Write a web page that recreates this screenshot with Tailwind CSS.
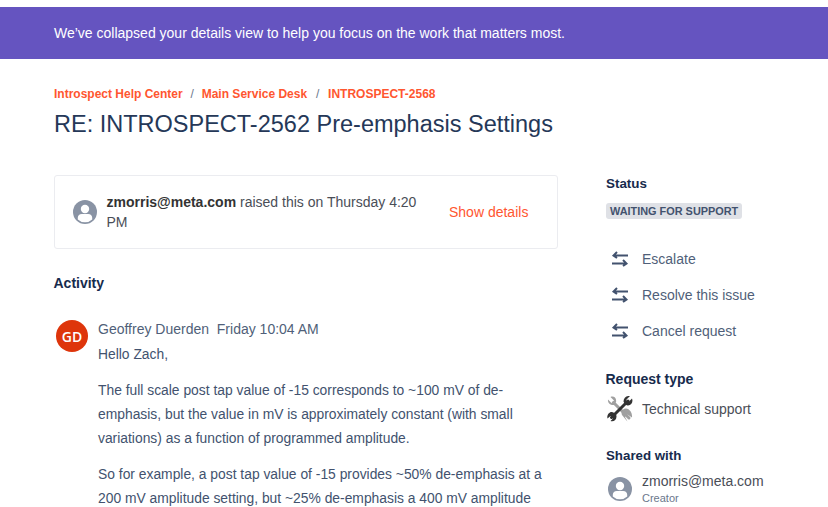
<!DOCTYPE html>
<html lang="en">
<head>
    <meta charset="UTF-8">
    <title>RE: INTROSPECT-2562 Pre-emphasis Settings</title>
    <script src="https://cdn.jsdelivr.net/npm/@tailwindcss/browser@4"></script>
</head>
<body class="bg-white h-[507px] overflow-hidden font-['Liberation_Sans',Arial,sans-serif] text-[14px] text-[#42526e]">
<div class="pt-[7px]">
    <div class="bg-[#6554c0] h-[52px] pl-[54px] flex items-center text-white text-[14px]">We’ve collapsed your details view to help you focus on the work that matters most.</div>
</div>

<div class="pl-[54px] flex">
    <div class="w-[504px] shrink-0">
        <div class="mt-[27px] flex items-center text-[12px] leading-[16px] font-bold text-[#ff5630] h-[16px]">
            <span>Introspect Help Center</span>
            <span class="font-normal text-[#6b778c] w-[19px] text-center">/</span>
            <span>Main Service Desk</span>
            <span class="font-normal text-[#6b778c] w-[21px] text-center">/</span>
            <span>INTROSPECT-2568</span>
        </div>
        <h1 class="mt-[6px] text-[23.5px] leading-[32px] text-[#253858] whitespace-nowrap">RE: INTROSPECT-2562 Pre-emphasis Settings</h1>

        <div class="mt-[35px] h-[74px] border border-[#ebecf0] rounded-[3px] flex items-center pl-[18px]">
            <svg class="w-6 h-6 shrink-0" viewBox="0 0 24 24">
                <circle cx="12" cy="12" r="12" fill="#8993a4"/>
                <circle cx="12" cy="9" r="4.2" fill="#fff"/>
                <path d="M4.8 19.5v-1.700c0-2.300 1.800-3.800 4-3.800h6.400c2.200 0 4 1.500 4 3.800v1.700a10.500 10.500 0 0 1-14.400 0z" fill="#fff"/>
            </svg>
            <div class="ml-[9.5px] w-[326px] leading-[20px] text-[#4a4e57]"><span class="font-bold text-[#333]">zmorris@meta.com</span> raised this on Thursday 4:20 PM</div>
            <a class="ml-[16.5px] text-[#ff5630]">Show details</a>
        </div>

        <div class="mt-[26px] -ml-[0.5px] font-bold text-[#172b4d] leading-[16px]">Activity</div>

        <div class="mt-[28px] flex">
            <div class="w-8 h-8 mt-[1px] ml-[2px] rounded-full bg-[#de350b] text-white flex items-center justify-center shrink-0 text-[14px] font-semibold font-['Open_Sans',sans-serif]">GD</div>
            <div class="ml-[10px] w-[452px] leading-[24px]">
                <div class="leading-[20px] text-[#505f79]">Geoffrey Duerden&nbsp; Friday 10:04 AM</div>
                <p class="mt-[3px] text-[13.85px] text-[#42526e]">Hello Zach,</p>
                <p class="mt-[12px] text-[13.85px] text-[#42526e]">The full scale post tap value of -15 corresponds to ~100 mV of de-emphasis, but the value in mV is approximately constant (with small variations) as a function of programmed amplitude.</p>
                <p class="mt-[12px] text-[13.85px] text-[#42526e]">So for example, a post tap value of -15 provides ~50% de-emphasis at a 200 mV amplitude setting, but ~25% de-emphasis a 400 mV amplitude</p>
            </div>
        </div>
    </div>

    <aside class="ml-[48px] w-[200px] shrink-0">
        <div class="mt-[117px] font-bold text-[13.4px] leading-[16px] text-[#172b4d]">Status</div>
        <span class="mt-[11px] inline-block bg-[#dfe1e6] rounded-[3px] px-[4px] h-[16px] leading-[16px] text-[10.9px] font-bold text-[#42526e]">WAITING FOR SUPPORT</span>

        <div class="mt-[26px] flex flex-col gap-[12px]">
            <div class="flex items-center h-6 text-[#505f79]">
                <svg class="w-[18px] h-[16px] ml-[5px] text-[#42526e]" viewBox="0 0 18 16" fill="none" stroke="currentColor" stroke-width="2"><path d="M17 4.500H2.500M6 1 2.500 4.500 6 7M1 12.500h14.500M12 9l3.500 3.500L12 15"/></svg>
                <span class="ml-[13px]">Escalate</span>
            </div>
            <div class="flex items-center h-6 text-[#505f79]">
                <svg class="w-[18px] h-[16px] ml-[5px] text-[#42526e]" viewBox="0 0 18 16" fill="none" stroke="currentColor" stroke-width="2"><path d="M17 4.500H2.500M6 1 2.500 4.500 6 7M1 12.500h14.500M12 9l3.500 3.500L12 15"/></svg>
                <span class="ml-[13px]">Resolve this issue</span>
            </div>
            <div class="flex items-center h-6 text-[#505f79]">
                <svg class="w-[18px] h-[16px] ml-[5px] text-[#42526e]" viewBox="0 0 18 16" fill="none" stroke="currentColor" stroke-width="2"><path d="M17 4.500H2.500M6 1 2.500 4.500 6 7M1 12.500h14.500M12 9l3.500 3.500L12 15"/></svg>
                <span class="ml-[13px]">Cancel request</span>
            </div>
        </div>

        <div class="mt-[28px] -ml-[0.5px] font-bold text-[#172b4d] leading-[16px] text-[14px]">Request type</div>
        <div class="mt-[9px] flex items-center h-[26px]">
            <svg class="w-[26px] h-[26px] ml-[1px] shrink-0" viewBox="0 0 26 26">
                <path d="M6.500 6.500 22 22" stroke="#a0a0a0" stroke-width="3" stroke-linecap="round"/>
                <path d="M1 3.500 4.500 7 7 4.500 3.500 1C6.500-.5 10 2 9 6L7 9C3.500 9.500.5 7 1 3.500zM24.500 24.500 20 20M19 12.500c-3 0-5.500 3-4 6.500l4.500 5.500 1 1-2.500-4.500 2.500-2.500 4.500 3C25.500 17 23 13 19 12.500z" fill="#a0a0a0"/>
                <path d="M21 5 4.500 21.500" stroke="#333" stroke-width="3" stroke-linecap="round"/>
                <path d="M25 2.500 21.500 6 19.500 5 19.500 3.500 23 0C19.500-.5 16.500 2 16.500 5.500L18 8.500 20.500 9.500C24 10 26.500 6.500 25 2.500zM.5 22.500l3-2.500 2.500 2.500L3.500 25c3 1 6-1 6-4.500 0-1.500-.5-3-2-3.500l-2.500-1C2.500 15.500-.5 19 .5 22.500z" fill="#333"/>
            </svg>
            <span class="ml-[9px] text-[#4a4e57]">Technical support</span>
        </div>

        <div class="mt-[26px] font-bold text-[13.3px] text-[#172b4d] leading-[16px]">Shared with</div>
        <div class="mt-[9px] flex">
            <svg class="w-6 h-6 mt-[4px] ml-[2px] shrink-0" viewBox="0 0 24 24">
                <circle cx="12" cy="12" r="12" fill="#8993a4"/>
                <circle cx="12" cy="9" r="4.2" fill="#fff"/>
                <path d="M4.8 19.5v-1.700c0-2.300 1.800-3.800 4-3.800h6.400c2.200 0 4 1.500 4 3.800v1.700a10.500 10.500 0 0 1-14.400 0z" fill="#fff"/>
            </svg>
            <div class="ml-[10px]">
                <div class="leading-[17px] text-[#4a4e57]">zmorris@meta.com</div>
                <div class="mt-[1px] text-[11px] leading-[14px] text-[#6b778c]">Creator</div>
            </div>
        </div>
    </aside>
</div>
</body>
</html>
